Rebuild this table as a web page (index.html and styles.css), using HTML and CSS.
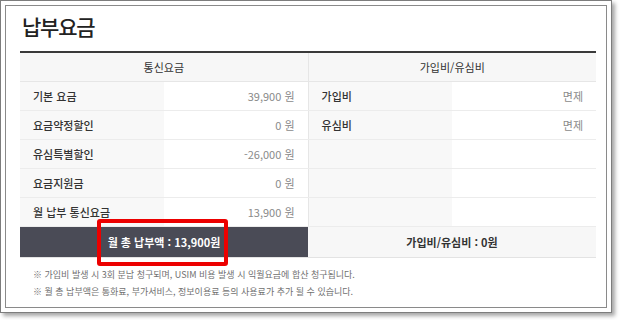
FILE: index.html
```html
<!DOCTYPE html>
<html lang="ko">
<head>
<meta charset="utf-8">
<title>납부요금</title>
<link rel="stylesheet" href="styles.css">
</head>
<body>
<div class="frame">
  <div class="panel">
    <h1 class="title">납부요금</h1>
    <div class="table-wrap">
      <table class="fee">
        <colgroup>
          <col class="c"><col class="c"><col class="c"><col class="c">
        </colgroup>
        <thead>
          <tr>
            <th colspan="2" class="half">통신요금</th>
            <th colspan="2">가입비/유심비</th>
          </tr>
        </thead>
        <tbody>
          <tr>
            <td class="lbl">기본 요금</td><td class="val half">39,900 원</td>
            <td class="lbl">가입비</td><td class="val">면제</td>
          </tr>
          <tr>
            <td class="lbl">요금약정할인</td><td class="val half">0 원</td>
            <td class="lbl">유심비</td><td class="val">면제</td>
          </tr>
          <tr>
            <td class="lbl">유심특별할인</td><td class="val half">-26,000 원</td>
            <td class="lbl"></td><td class="val"></td>
          </tr>
          <tr>
            <td class="lbl">요금지원금</td><td class="val half">0 원</td>
            <td class="lbl"></td><td class="val"></td>
          </tr>
          <tr>
            <td class="lbl">월 납부 통신요금</td><td class="val half">13,900 원</td>
            <td class="lbl"></td><td class="val"></td>
          </tr>
          <tr class="sum">
            <td colspan="2" class="sum-dark">월 총 납부액 : 13,900원</td>
            <td colspan="2" class="sum-light">가입비/유심비 : 0원</td>
          </tr>
        </tbody>
      </table>
      <div class="highlight"></div>
    </div>
    <ul class="notes">
      <li>※ 가입비 발생 시 3회 분납 청구되며, USIM 비용 발생 시 익월요금에 합산 청구됩니다.</li>
      <li>※ 월 총 납부액은 통화료, 부가서비스, 정보이용료 등의 사용료가 추가 될 수 있습니다.</li>
    </ul>
  </div>
</div>
</body>
</html>
```

FILE: styles.css
```css
* { box-sizing: border-box; }

html, body {
  margin: 0;
  padding: 0;
  background: #ffffff;
}

body {
  width: 620px;
  height: 320px;
  font-family: "Noto Sans CJK KR", "Noto Sans", sans-serif;
  color: #333;
  overflow: hidden;
}

.frame {
  width: 612px;
  height: 313px;
  border: 1px solid #7d7d7d;
  padding: 4px;
  background: #fff;
  box-shadow: 3px 3px 4px rgba(0, 0, 0, 0.35);
}

.panel {
  height: 100%;
  border: 1px solid #8a8a8a;
  padding: 0 9px 0 14px;
  background: #fff;
}

.title {
  margin: 0 0 0 2px;
  height: 45px;
  padding-top: 6px;
  font-size: 21px;
  line-height: 28px;
  font-weight: 500;
  letter-spacing: -1.2px;
  color: #222;
}

.table-wrap {
  position: relative;
  width: 576px;
}

.fee {
  width: 576px;
  table-layout: fixed;
  border-collapse: collapse;
  border-top: 2px solid #3a3a3a;
  font-size: 11px;
}

.fee col.c { width: 144px; }

.fee th {
  height: 29px;
  padding: 0;
  background: #f7f7f7;
  font-weight: 400;
  color: #333;
  text-align: center;
  border-bottom: 1px solid #e6e6e6;
}

.fee td {
  height: 29px;
  padding: 0 13px;
  border-bottom: 1px solid #ececec;
  white-space: nowrap;
}

.fee .half { border-right: 1px solid #e6e6e6; }

.fee td.lbl {
  background: #f8f8f8;
  font-weight: 500;
  color: #333;
}

.fee td.val {
  background: #fff;
  color: #8a8a8a;
  text-align: right;
}

.fee tr.sum td {
  height: 31px;
  text-align: center;
  font-weight: 700;
  border-bottom: 1px solid #e3e3e3;
}

.fee td.sum-dark {
  background: #4a4b56;
  color: #fff;
}

.fee td.sum-light {
  background: #f7f7f7;
  color: #333;
}

.highlight {
  position: absolute;
  left: 77px;
  top: 168px;
  width: 131px;
  height: 47px;
  border: 4px solid #ec0000;
  border-radius: 3px;
}

.notes {
  list-style: none;
  margin: 0;
  padding: 8px 0 0 13px;
  font-size: 9px;
  line-height: 17px;
  color: #707070;
}
```
